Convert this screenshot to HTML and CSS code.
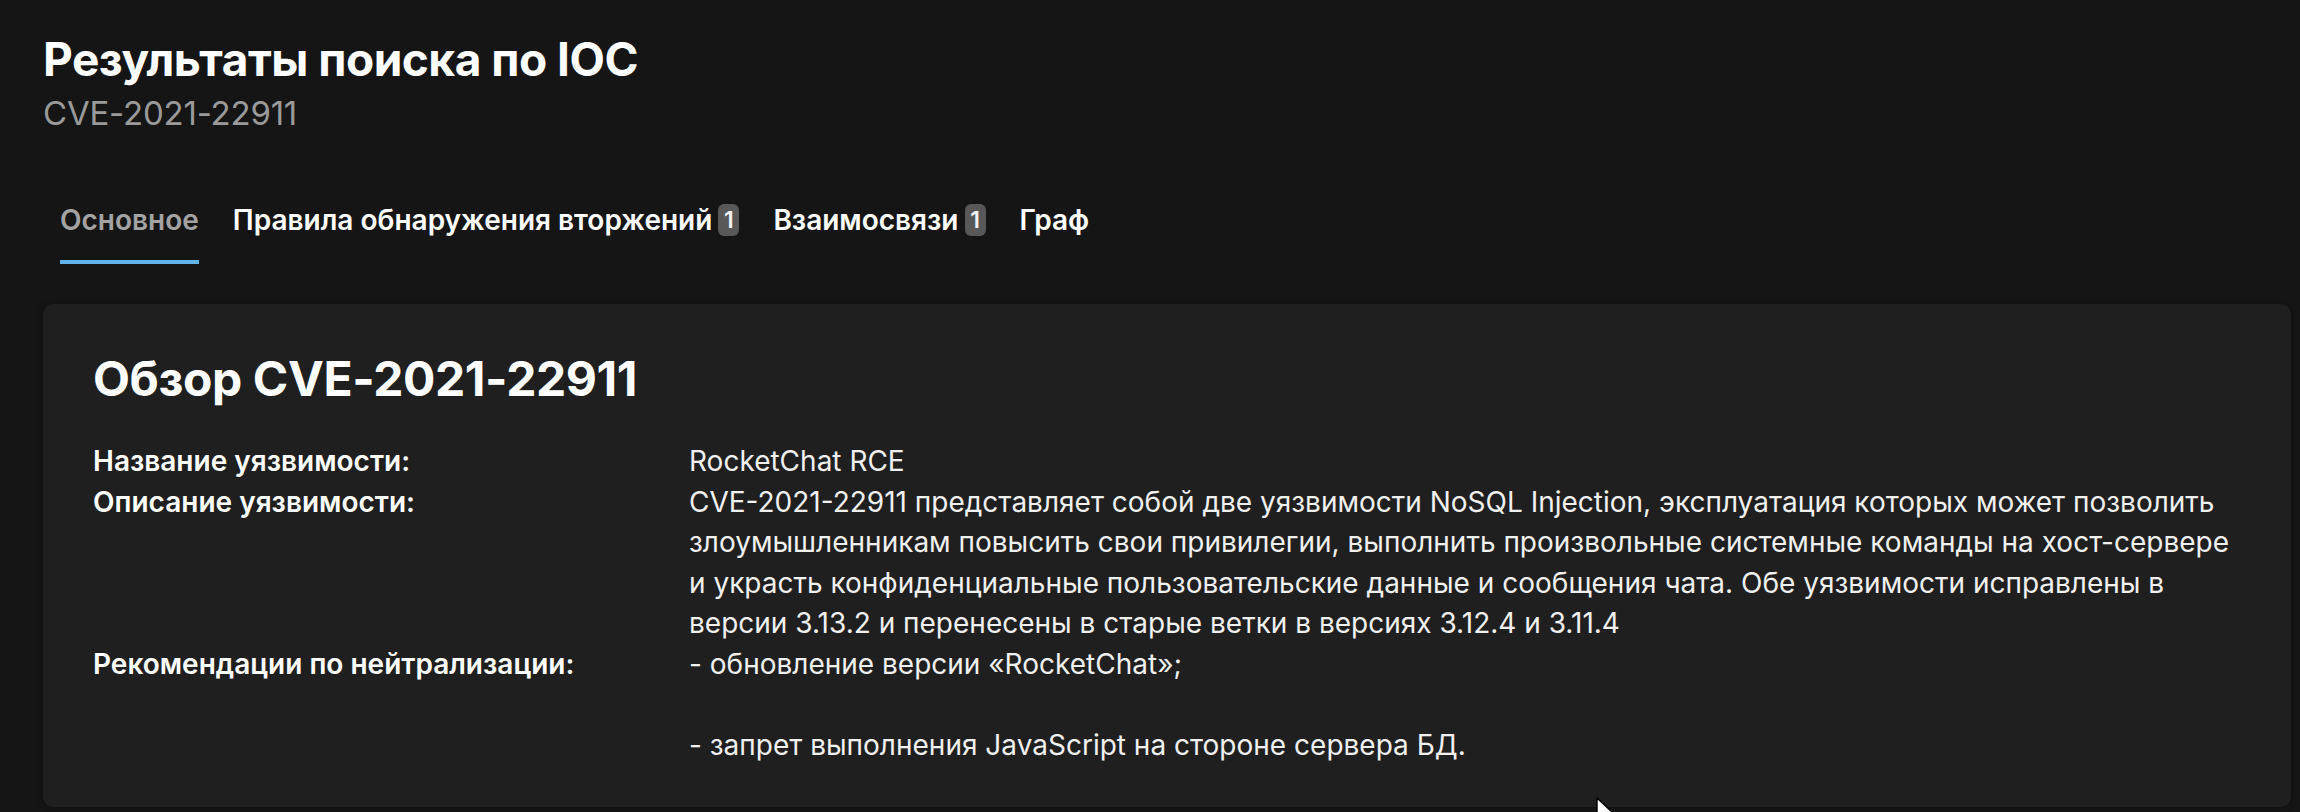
FILE: index.html
```html
<!DOCTYPE html>
<html lang="ru">
<head>
<meta charset="utf-8">
<title>Результаты поиска по IOC</title>
<link rel="stylesheet" href="styles.css">
</head>
<body>
<main class="page">
  <header class="page-header">
    <h1 class="page-title">Результаты поиска по IOC</h1>
    <div class="page-subtitle">CVE-2021-22911</div>
  </header>

  <nav class="tabs">
    <a class="tab tab-active">Основное</a>
    <a class="tab">Правила обнаружения вторжений <span class="badge">1</span></a>
    <a class="tab">Взаимосвязи <span class="badge">1</span></a>
    <a class="tab">Граф</a>
  </nav>

  <section class="card">
    <h2 class="card-title">Обзор CVE-2021-22911</h2>
    <dl class="details">
      <dt class="label">Название уязвимости:</dt>
      <dd class="value">RocketChat RCE</dd>
      <dt class="label">Описание уязвимости:</dt>
      <dd class="value">CVE-2021-22911 представляет собой две уязвимости NoSQL Injection, эксплуатация которых может позволить злоумышленникам повысить свои привилегии, выполнить произвольные системные команды на хост-сервере и украсть конфиденциальные пользовательские данные и сообщения чата. Обе уязвимости исправлены в версии 3.13.2 и перенесены в старые ветки в версиях 3.12.4 и 3.11.4</dd>
      <dt class="label">Рекомендации по нейтрализации:</dt>
      <dd class="value">- обновление версии «RocketChat»;<br><br>- запрет выполнения JavaScript на стороне сервера БД.</dd>
    </dl>
  </section>

  <svg class="cursor" width="24" height="30" viewBox="0 0 24 30" aria-hidden="true">
    <path d="M1 1 L1 23 L6.5 17.5 L10.5 26.5 L14 25 L10 16.5 L17.5 16.5 Z" fill="#ffffff" stroke="#000000" stroke-width="1.4" stroke-linejoin="round"/>
  </svg>
</main>
</body>
</html>
```

FILE: styles.css
```css
* {
  box-sizing: border-box;
}

html, body {
  margin: 0;
  background: #151515;
}

body {
  font-family: "Inter", "Noto Sans", sans-serif;
  color: #ffffff;
  height: 812px;
  overflow: hidden;
}

.page {
  position: relative;
  padding: 31px 9px 0 43px;
  display: flex;
  flex-direction: column;
}

.page-header {
  display: flex;
  flex-direction: column;
  gap: 7px;
}

.page-title {
  margin: 0;
  font-size: 46px;
  line-height: 56px;
  font-weight: 700;
  letter-spacing: -0.5px;
  color: #ffffff;
}

.page-subtitle {
  font-size: 33px;
  line-height: 38px;
  font-weight: 400;
  letter-spacing: -0.2px;
  color: #9a9a9a;
}

.tabs {
  display: flex;
  gap: 34px;
  padding-left: 17px;
  margin-top: 72px;
}

.tab {
  display: flex;
  align-items: center;
  gap: 6px;
  font-size: 28px;
  line-height: 32px;
  font-weight: 600;
  color: #ffffff;
  padding-bottom: 24px;
  border-bottom: 4px solid transparent;
}

.tab-active {
  color: #a3a3a3;
  border-bottom-color: #63b3ed;
}

.badge {
  display: inline-flex;
  align-items: center;
  justify-content: center;
  min-width: 21px;
  height: 32px;
  padding: 0 4px;
  border-radius: 6px;
  background: #585858;
  color: #f2f2f2;
  font-size: 23px;
  font-weight: 600;
}

.card {
  margin-top: 40px;
  background: #1f1f1f;
  border-radius: 10px;
  padding: 47px 50px 42px 50px;
  box-shadow: 0 0 6px rgba(0, 0, 0, 0.35);
}

.card-title {
  margin: 0;
  font-size: 48px;
  line-height: 56px;
  font-weight: 700;
  letter-spacing: -0.4px;
}

.details {
  margin: 34px 0 0 0;
  display: grid;
  grid-template-columns: 596px 1fr;
  font-size: 28px;
  line-height: 40.5px;
}

.label {
  margin: 0;
  font-weight: 600;
  color: #ffffff;
}

.value {
  margin: 0;
  font-weight: 400;
  color: #f0f0f0;
}

.cursor {
  position: absolute;
  left: 1596px;
  top: 797px;
}
```
